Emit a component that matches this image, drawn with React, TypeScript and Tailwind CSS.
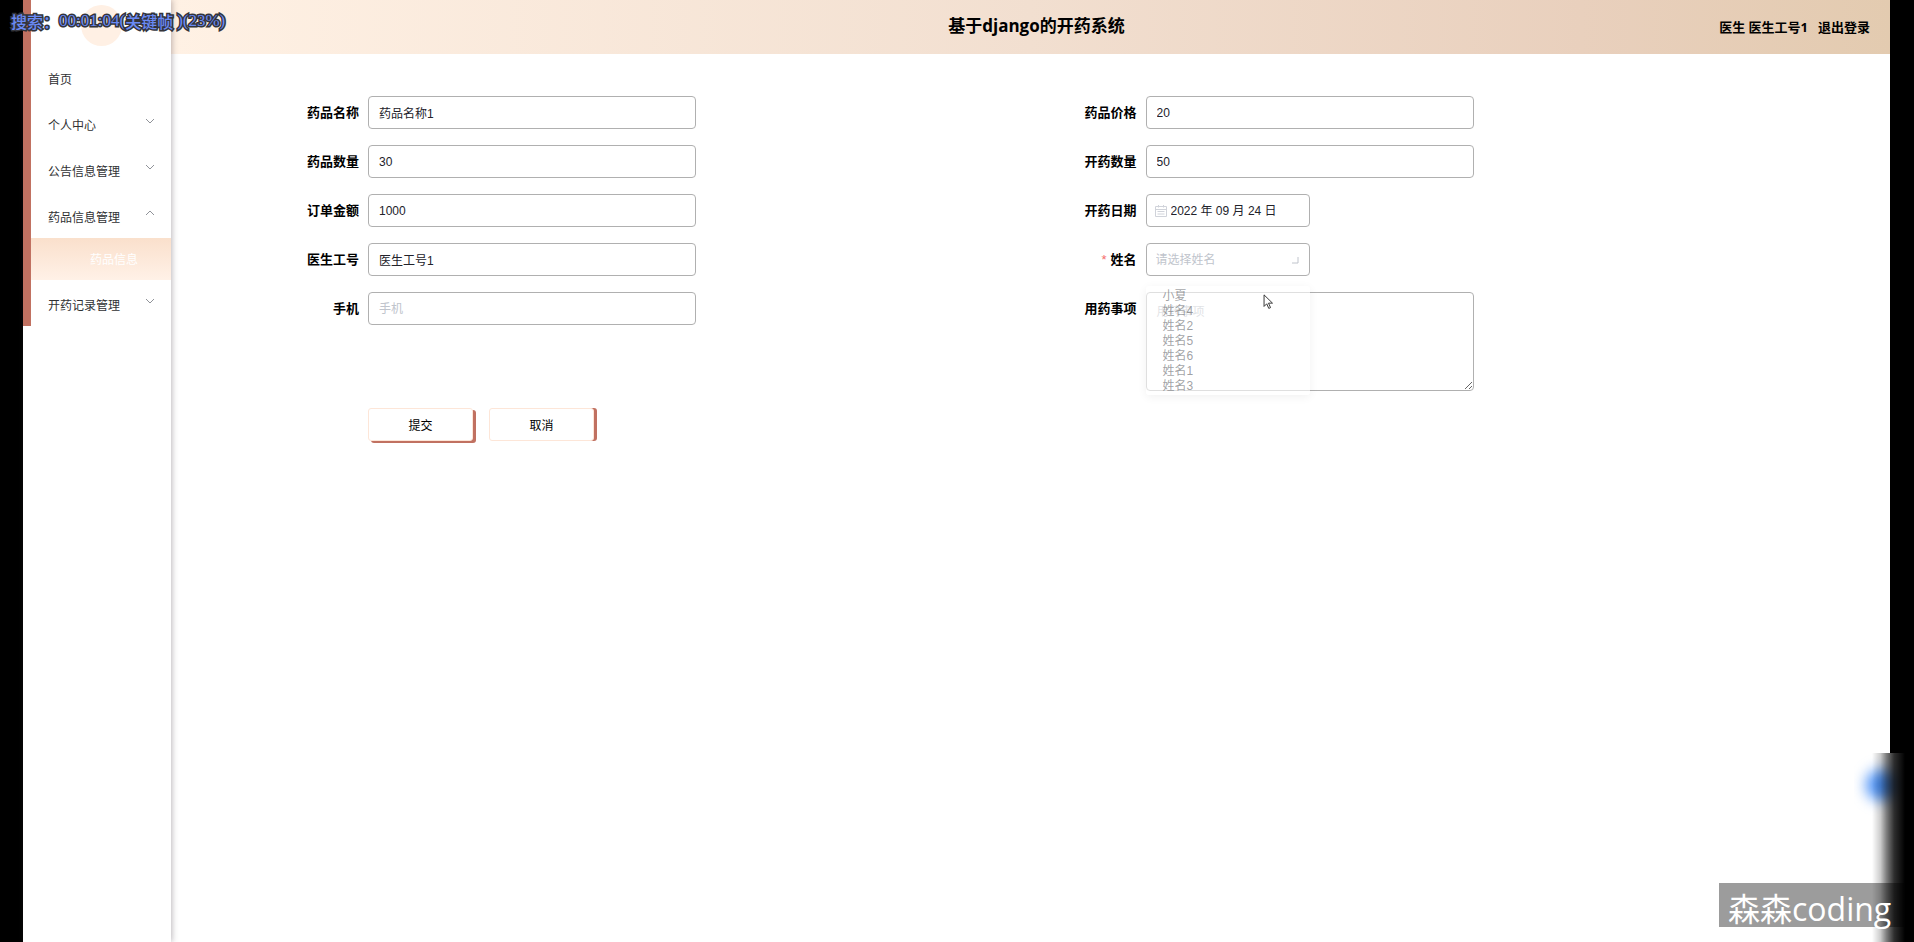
import React from "react";
import type { ReactNode } from "react";

const menu = [
  { label: "首页" },
  { label: "个人中心", arrow: "down" },
  { label: "公告信息管理", arrow: "down" },
  { label: "药品信息管理", arrow: "up", child: "药品信息" },
  { label: "开药记录管理", arrow: "down" },
];

const names = ["姓名4", "姓名2", "姓名5", "姓名6", "姓名1", "姓名3"];

const box =
  "h-[33px] rounded-[4px] border border-[#b0b0b0] bg-white text-[12px] text-[#22222a] outline-none placeholder:text-[#c0c4cc]";

function Chevron({ up }: { up?: boolean }) {
  return (
    <svg viewBox="0 0 10 6" className="h-[6px] w-[10px]" fill="none" stroke="#909399" strokeWidth="1">
      <path d={up ? "M1 5 5 1l4 4" : "M1 1l4 4 4-4"} />
    </svg>
  );
}

function Sidebar() {
  return (
    <aside className="relative z-10 w-[148px] shrink-0 bg-white shadow-[1px_0_6px_rgba(60,50,60,0.35)]">
      <div className="border-l-8 border-[#c17161]">
        <div className="flex h-[54px] justify-center pt-[5px]">
          <div className="size-[41px] rounded-full bg-[#fff0e4]" />
        </div>
        <nav>
          {menu.map((m) => (
            <React.Fragment key={m.label}>
              <a href="#" className="flex h-[46px] items-center justify-between pr-4 pl-[17px] text-[#303133]">
                <span className="pt-[6px]">{m.label}</span>
                {m.arrow && (
                  <span className="pb-1">
                    <Chevron up={m.arrow === "up"} />
                  </span>
                )}
              </a>
              {m.child && (
                <a
                  href="#"
                  className="flex h-[42px] items-center bg-linear-to-b from-[#fae0cc] to-[#fff1e7] pt-[2px] pl-[59px] text-white"
                >
                  {m.child}
                </a>
              )}
            </React.Fragment>
          ))}
        </nav>
      </div>
    </aside>
  );
}

function Field({ id, label, required, children }: { id: string; label: string; required?: boolean; children: ReactNode }) {
  return (
    <div className="flex items-start">
      <label htmlFor={id} className="w-[116px] shrink-0 pr-[9px] text-right text-[13px] leading-[33px] font-bold text-black">
        {required && <span className="mr-1 font-normal text-[#f56c6c]">*</span>}
        {label}
      </label>
      {children}
    </div>
  );
}

function TextField({ id, label, value, placeholder }: { id: string; label: string; value?: string; placeholder?: string }) {
  return (
    <Field id={id} label={label}>
      <input id={id} defaultValue={value} placeholder={placeholder} className={`${box} w-[328px] px-[10px]`} />
    </Field>
  );
}

function Header() {
  return (
    <header className="flex h-[54px] items-center bg-[linear-gradient(to_right,#fff1e4,#f2dfd0_50%,#e9d0bd_82%,#e3cbb0)] font-['Open_Sans','Noto_Sans_CJK_SC',sans-serif] text-black">
      <div className="flex-1 pl-8" />
      <h1 className="pb-[2px] text-[17px] font-bold">基于django的开药系统</h1>
      <div className="flex flex-1 items-center justify-end gap-[10px] pt-[2px] pr-5 text-[13px] font-bold">
        <span>医生 医生工号1</span>
        <a href="#">退出登录</a>
      </div>
    </header>
  );
}

export default function App() {
  return (
    <div className="relative flex min-h-screen overflow-hidden bg-black px-6 pl-[23px] font-['Liberation_Sans','Noto_Sans_CJK_SC',sans-serif] text-[12px]">
      <Sidebar />
      <div className="min-w-0 flex-1 bg-white">
        <Header />
        <form className="pt-[42px] pr-[83px] pl-[81px]">
          <div className="grid grid-cols-2 gap-y-4">
            <TextField id="name" label="药品名称" value="药品名称1" />
            <TextField id="price" label="药品价格" value="20" />
            <TextField id="stock" label="药品数量" value="30" />
            <TextField id="count" label="开药数量" value="50" />
            <TextField id="total" label="订单金额" value="1000" />
            <Field id="date" label="开药日期">
              <div className={`${box} flex w-[164px] items-center gap-1 pl-2`}>
                <svg viewBox="0 0 12 12" className="size-3 shrink-0" fill="none" stroke="#d0d3da" strokeWidth="1">
                  <path d="M.5 1.5h11v10H.5zM.5 4.5h11M3.5 0v2.5M8.5 0v2.5M2.5 6.5h7M2.5 9h7" />
                </svg>
                <input id="date" defaultValue="2022 年 09 月 24 日" className="w-full min-w-0 outline-none" />
              </div>
            </Field>
            <TextField id="doctor" label="医生工号" value="医生工号1" />
            <Field id="patient" label="姓名" required>
              <div className="relative">
                <select id="patient" defaultValue="" className={`${box} w-[164px] appearance-none px-[9px] text-[#c0c4cc]`}>
                  <option value="">请选择姓名</option>
                  {names.map((n) => (
                    <option key={n}>{n}</option>
                  ))}
                </select>
                <svg
                  viewBox="0 0 8 8"
                  className="pointer-events-none absolute top-[13px] right-[11px] size-2"
                  fill="none"
                  stroke="#c0c4cc"
                >
                  <path d="M7 1v6H1" />
                </svg>
                <ul className="absolute top-[43px] left-0 z-10 h-[109px] w-[164px] rounded-[3px] bg-white/60 pt-[3px] pl-[17px] leading-[15px] text-[#606266]/60 shadow-[0_2px_10px_rgba(0,0,0,0.06)]">
                  <li>小夏</li>
                  {names.map((n) => (
                    <li key={n}>{n}</li>
                  ))}
                </ul>
                <svg viewBox="0 0 12 18" className="absolute top-[51px] left-[117px] z-20 h-[16px] w-[11px]">
                  <path d="M1 1v13l3-3 2.3 5.2 2-.9L6 10.300h4.500z" fill="#fff" stroke="#222" />
                </svg>
              </div>
            </Field>
            <TextField id="phone" label="手机" placeholder="手机" />
            <Field id="notes" label="用药事项">
              <textarea
                id="notes"
                placeholder="用药事项"
                className="h-[99px] w-[328px] rounded-[4px] border border-[#b0b0b0] px-[10px] py-[9px] leading-5 outline-none placeholder:text-[#b4b8c0]"
              />
            </Field>
          </div>
          <div className="mt-[17px] flex gap-4 pl-[116px]">
            <button
              type="button"
              className="h-[33px] w-[105px] rounded-[3px] border border-[#fde6d8] bg-white pt-[3px] shadow-[3px_2px_0_#c17161]"
            >
              提交
            </button>
            <button
              type="button"
              className="h-[33px] w-[105px] rounded-[3px] border border-[#fde6d8] bg-white pt-[3px] shadow-[3px_0_0_#c17161]"
            >
              取消
            </button>
          </div>
        </form>
      </div>

      <div className="absolute top-0 left-[11px] z-20 flex h-[42px] items-center font-['Liberation_Serif','Noto_Sans_CJK_SC',serif] text-[17px] font-medium text-[#6a8af5] [paint-order:stroke_fill] [-webkit-text-stroke:3px_#33343a]">
        <span className="font-['Noto_Sans_CJK_SC',sans-serif] text-[16px]">搜索：</span>
        <span>00:01:04(</span>
        <span className="font-['Noto_Sans_CJK_SC',sans-serif] text-[16px]">关键帧</span>
        <span className="pl-1">)(23%)</span>
      </div>

      <div className="absolute right-0 bottom-0 z-20 h-[189px] w-[60px] overflow-hidden bg-white">
        <div className="absolute top-4 left-[12px] size-8 rounded-full bg-[#4a90f5] blur-[7px]" />
        <div className="absolute inset-0 bg-[linear-gradient(to_right,transparent_30%,rgba(0,0,0,0.2)_44%,rgba(0,0,0,0.5)_54%,rgba(0,0,0,0.82)_67%,black_85%)]" />
      </div>
      <div className="absolute right-[10px] bottom-[15px] z-30 flex h-[44px] w-[185px] items-center bg-black/39 pl-[9px] font-['Open_Sans','Noto_Sans_CJK_SC',sans-serif] text-[32px] whitespace-nowrap text-white">
        <span className="pt-2">森森coding</span>
      </div>
    </div>
  );
}
